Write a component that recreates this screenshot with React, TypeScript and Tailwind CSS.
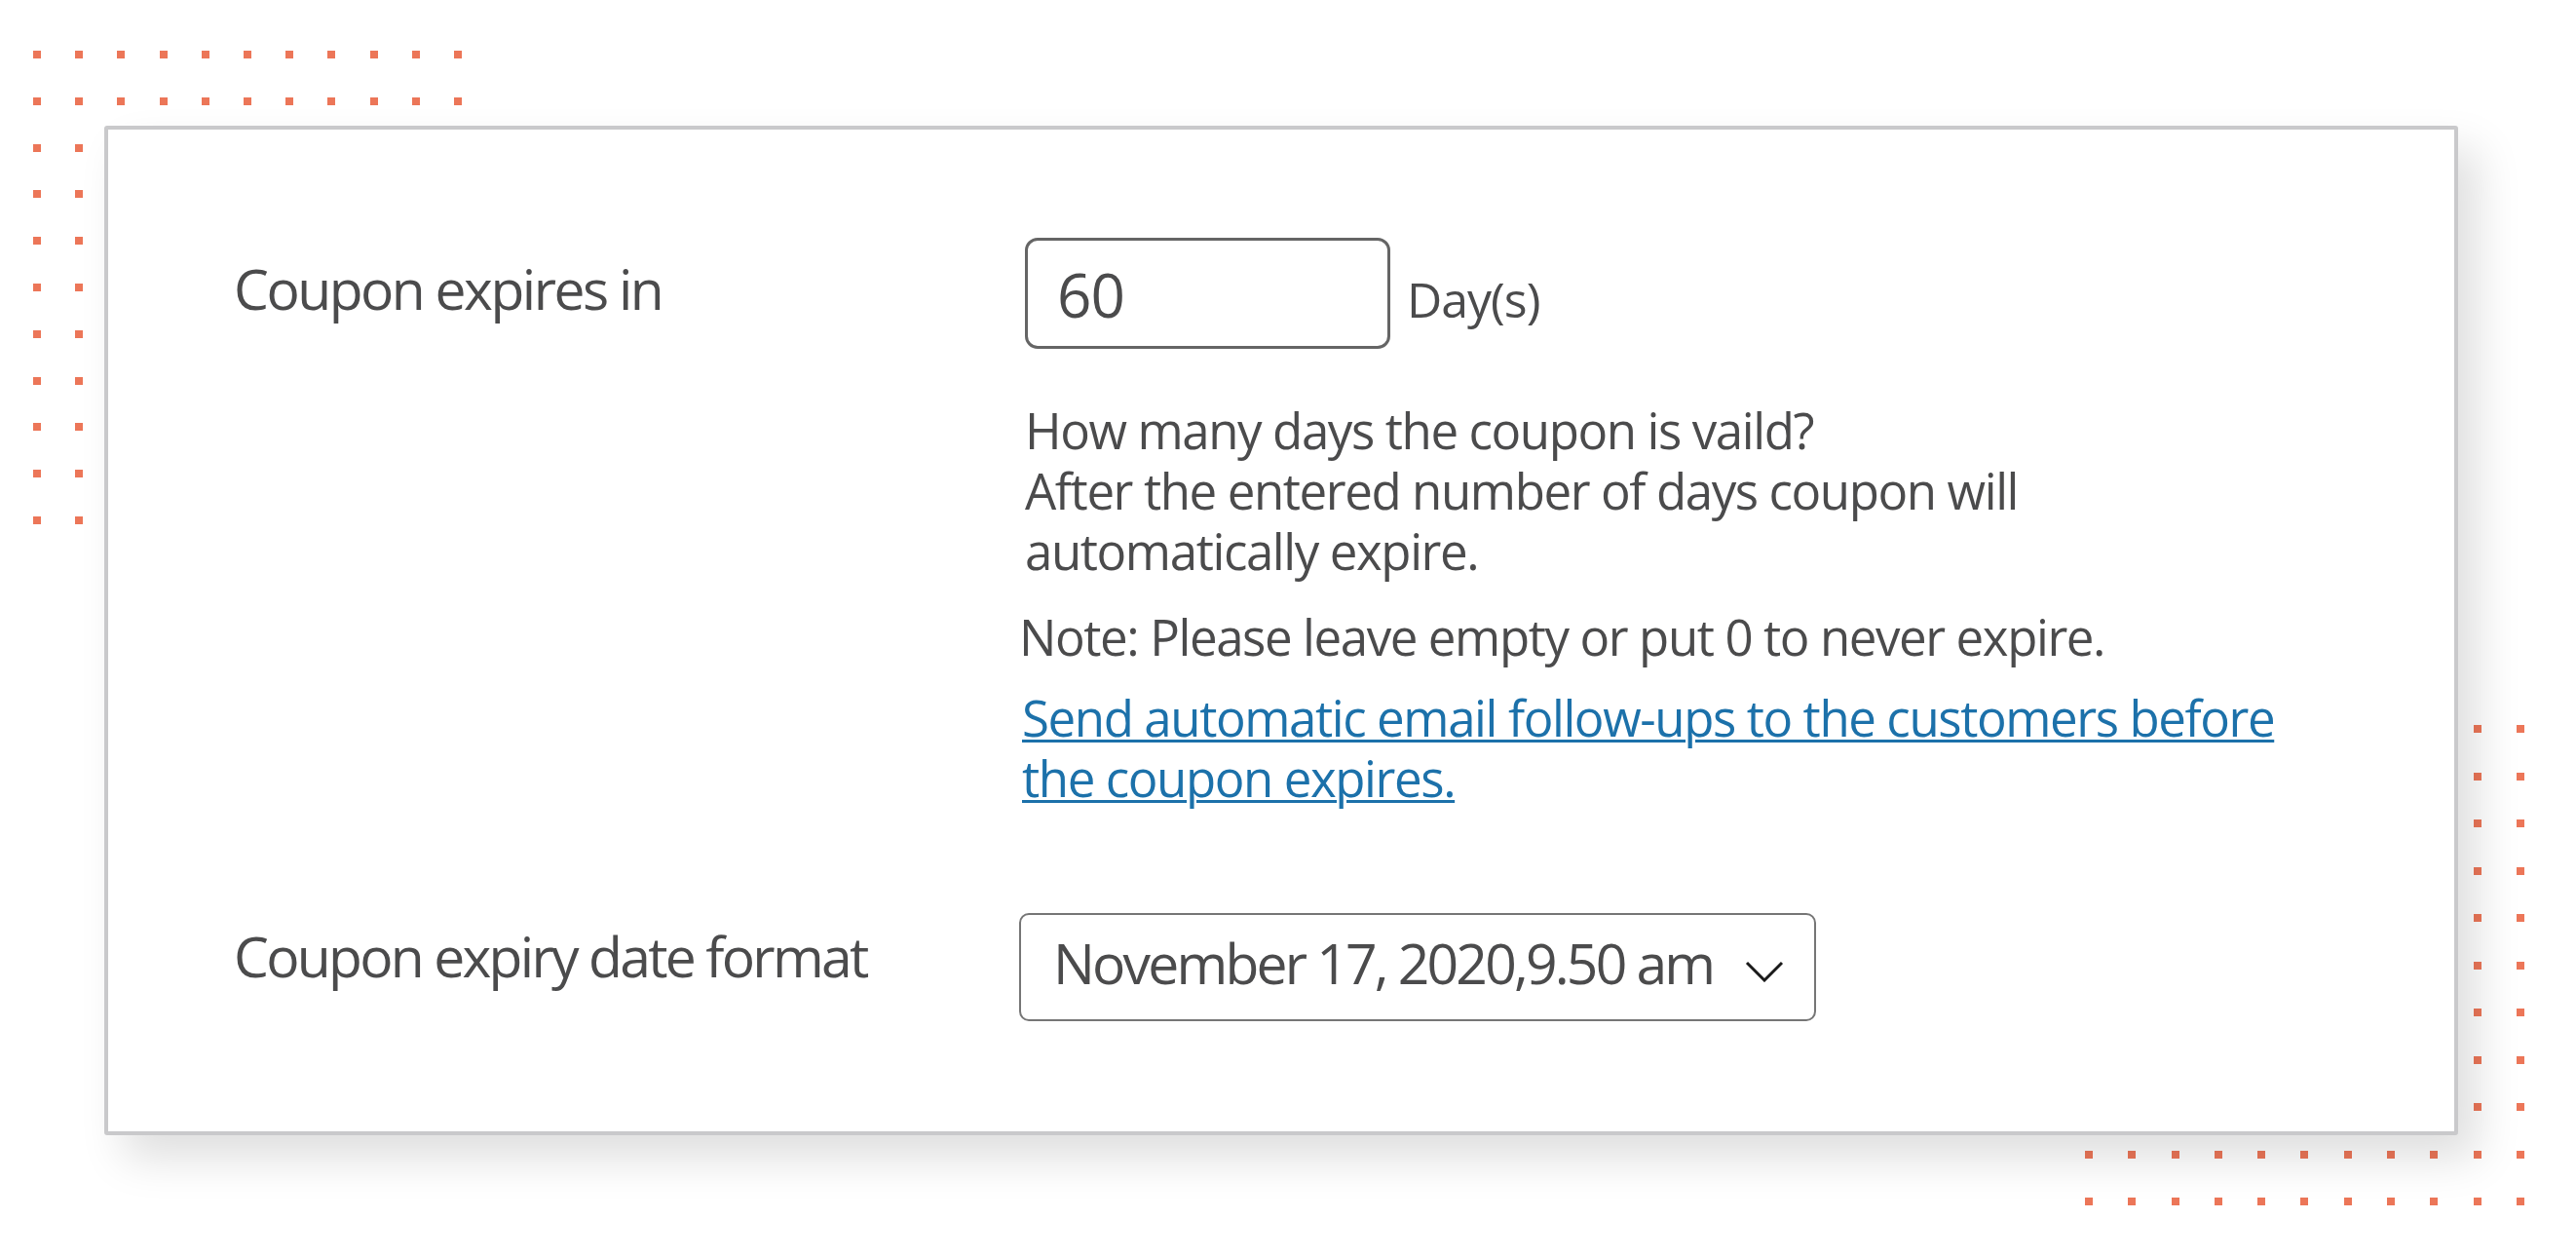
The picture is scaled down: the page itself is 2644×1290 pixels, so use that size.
import React from 'react'

const cells = Array.from({ length: 121 }, (_, n) => n)

// the two L-shaped dot patterns behind the card
const DotGrid: React.FC<{ corner: 'top' | 'bottom' }> = ({ corner }) => {
  const isTop = corner === 'top'
  return (
    <div
      className={
        isTop
          ? 'absolute left-[34px] top-[52px] grid grid-cols-[repeat(11,8px)] gap-x-[35.2px] gap-y-[39.8px]'
          : 'absolute left-[2140px] top-[744px] grid grid-cols-[repeat(11,8px)] gap-x-[36.3px] gap-y-[40.5px]'
      }
    >
      {cells.map((n) => {
        const row = Math.floor(n / 11)
        const col = n % 11
        const on = isTop ? row < 2 || col < 2 : row > 8 || col > 8
        return <div key={n} className={on ? 'h-[8px] w-[8px] bg-[#ec7658]' : 'h-[8px] w-[8px]'} />
      })}
    </div>
  )
}

const App: React.FC = () => {
  return (
    <div className="relative h-[1290px] w-[2644px] overflow-hidden bg-white pl-[107px] pt-[129px] font-['Open_Sans',sans-serif] text-[#4b4b4c]">
      <DotGrid corner="top" />
      <DotGrid corner="bottom" />

      <div className="relative z-10 w-[2416px] rounded-[3px] border-4 border-[#c9c9cb] bg-white pb-[113px] pl-[129px] pt-[111px] shadow-[20px_24px_45px_rgba(0,0,0,0.13)]">
        {/* expiry days */}
        <div className="flex items-start">
          <div className="w-[806px] shrink-0 text-[57px] leading-[104px] tracking-[-2.5px]">Coupon expires in</div>
          <div className="flex flex-col">
            <div className="flex items-start">
              <div className="ml-[6px] flex h-[114px] w-[375px] items-center rounded-[13px] border-[3px] border-[#656565] pl-[30px] pt-[2px] text-[62px] tracking-[-1px]">
                60
              </div>
              <span className="ml-[17px] mt-[6px] text-[50px] leading-[114px] tracking-[-1px]">Day(s)</span>
            </div>
            <p className="mt-[46px] pl-[6px] text-[51px] leading-[62px] tracking-[-1.4px]">
              How many days the coupon is vaild?
              <br />
              After the entered number of days coupon will
              <br />
              automatically expire.
            </p>
            <p className="mt-[27px] text-[51px] leading-[60px] tracking-[-1.4px]">
              Note: Please leave empty or put 0 to never expire.
            </p>
            <a
              href="#"
              className="mt-[22px] pl-[3px] text-[51px] leading-[62px] tracking-[-1.4px] text-[#1c71aa] underline decoration-[2.5px] underline-offset-[3px]"
            >
              Send automatic email follow-ups to the customers before
              <br />
              the coupon expires.
            </a>
          </div>
        </div>

        {/* date format */}
        <div className="mt-[100px] flex items-start">
          <div className="w-[806px] shrink-0 text-[57px] leading-[104px] tracking-[-2.7px]">Coupon expiry date format</div>
          <div className="mt-[8px] flex h-[111px] w-[818px] items-center justify-between rounded-[10px] border-2 border-[#767676] pl-[33px] pr-[31px]">
            <span className="-mt-[7px] text-[57px] tracking-[-2.8px]">November 17, 2020,9.50 am</span>
            <svg className="mt-[9px]" width="40" height="22" viewBox="0 0 40 22" fill="none">
              <polyline points="2,2 20,20 38,2" stroke="#1a1a1a" strokeWidth="3" />
            </svg>
          </div>
        </div>
      </div>
    </div>
  )
}

export default App
